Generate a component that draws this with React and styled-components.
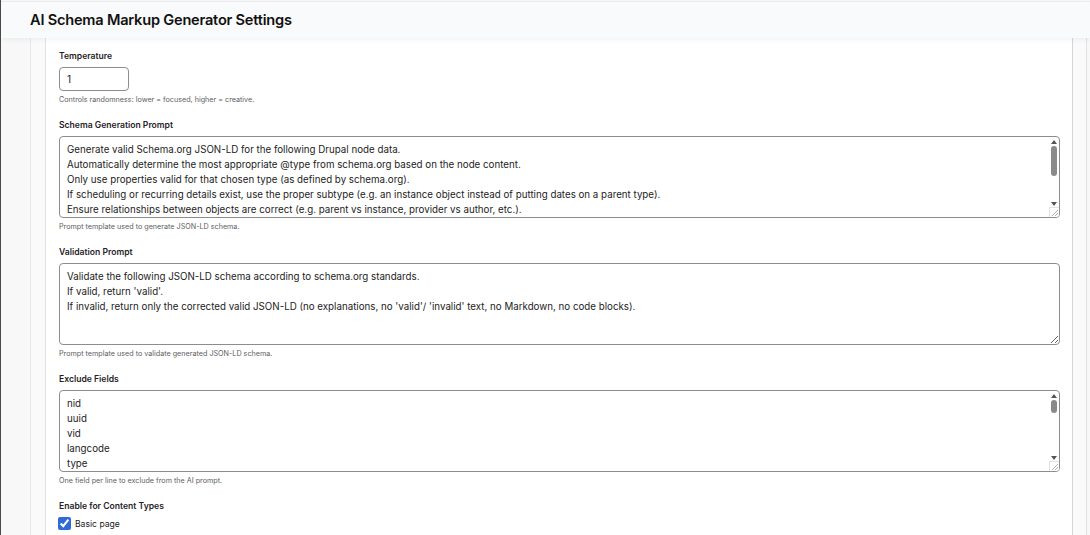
import styled, { createGlobalStyle } from "styled-components";

const GlobalStyle = createGlobalStyle`
  html, body {
    margin: 0;
    padding: 0;
    background: #f8f8f9;
    font-family: Inter, "Noto Sans", "Liberation Sans", sans-serif;
    color: #222;
  }
  * { box-sizing: border-box; }
`;

const Page = styled.div`
  min-height: 535px;
  border-left: 1px solid #4a4a4a;
  display: flex;
  flex-direction: column;
`;

const Header = styled.header`
  height: 37px;
  margin-top: 1px;
  border-top: 1px solid #ececee;
  background: #f9fafb;
  display: flex;
  align-items: center;
  padding-left: 29px;
  box-shadow: 0 2px 5px rgba(0, 0, 0, 0.05);
  position: relative;
  z-index: 1;
`;

const Title = styled.h1`
  margin: 0;
  font-size: 14.6px;
  font-weight: 600;
  letter-spacing: -0.015em;
  color: #111;
`;

const Outer = styled.div`
  flex: 1;
  margin-left: 29px;
  margin-right: 3px;
  border-left: 1px solid #e8e8ea;
  border-right: 1px solid #e2e2e4;
  background: #fafafa;
  padding: 0 13px 0 14px;
  display: flex;
`;

const Card = styled.main`
  flex: 1;
  background: #fff;
  border-left: 1px solid #e2e2e4;
  border-right: 1px solid #d6d6d8;
  padding: 12px 12px 0 13px;
`;

const Field = styled.div`
  display: flex;
  flex-direction: column;
  margin-bottom: 14px;
`;

const Label = styled.label`
  font-size: 8.6px;
  font-weight: 600;
  line-height: 12px;
  color: #1f2228;
  margin-bottom: 5px;
`;

const TextInput = styled.input`
  width: 70px;
  height: 24px;
  border: 1px solid #8d8d8d;
  border-radius: 4px;
  padding: 0 7px;
  font-family: inherit;
  font-size: 10px;
  color: #222;
`;

const AreaWrap = styled.div`
  position: relative;
`;

const TextArea = styled.textarea`
  width: 100%;
  height: 82px;
  border: 1px solid #8d8d8d;
  border-radius: 4px;
  padding: 4.5px 18px 3px 7px;
  font-family: inherit;
  font-size: 9.75px;
  line-height: 15px;
  color: #1c1c1c;
  resize: vertical;
  white-space: pre;
  overflow: hidden;
  display: block;
`;

/* drawn scrollbar, sits over the textarea's right edge */
const ScrollTrack = styled.div`
  position: absolute;
  top: 3px;
  right: 2px;
  bottom: 11px;
  width: 9px;
  display: flex;
  flex-direction: column;
  align-items: center;
  pointer-events: none;
`;

const Arrow = styled.svg`
  flex: none;
  margin: 1px 0;
`;

const Thumb = styled.div`
  flex: none;
  width: 6px;
  border-radius: 3px;
  background: #8a8a8a;
`;

const Spacer = styled.div`
  flex: 1;
`;

const Corner = styled.div`
  position: absolute;
  right: 1px;
  bottom: 1px;
  width: 10px;
  height: 10px;
  border-left: 1px solid #e2e2e2;
  border-top: 1px solid #e2e2e2;
  background: #fff;
  pointer-events: none;
  border-bottom-right-radius: 3px;
`;

const Grip = styled.svg`
  position: absolute;
  right: 1px;
  bottom: 1px;
`;

const Help = styled.div`
  margin-top: 4px;
  font-size: 7.2px;
  line-height: 10px;
  color: #5e5e62;
`;

const CheckRow = styled.label`
  display: flex;
  align-items: center;
  gap: 4px;
  font-size: 8.6px;
  color: #222;
`;

const Check = styled.input`
  width: 13px;
  height: 13px;
  margin: 0 0 0 -1px;
  accent-color: #2f6bd8;
`;

function ScrollArea({ value, thumbTop, thumbSize }) {
  return (
    <AreaWrap>
      <TextArea defaultValue={value} />
      <ScrollTrack>
        <Arrow width="6" height="4" viewBox="0 0 6 4">
          <path d="M3 0L6 4H0z" fill="#555" />
        </Arrow>
        <Thumb style={{ marginTop: thumbTop, height: thumbSize }} />
        <Spacer />
        <Arrow width="6" height="4" viewBox="0 0 6 4">
          <path d="M0 0H6L3 4z" fill="#555" />
        </Arrow>
      </ScrollTrack>
      <Corner>
        <Grip width="7" height="7" viewBox="0 0 7 7">
          <path d="M7 1L1 7M7 4L4 7" stroke="#999" strokeWidth="0.8" />
        </Grip>
      </Corner>
    </AreaWrap>
  );
}

const schemaPrompt = `Generate valid Schema.org JSON-LD for the following Drupal node data.
Automatically determine the most appropriate @type from schema.org based on the node content.
Only use properties valid for that chosen type (as defined by schema.org).
If scheduling or recurring details exist, use the proper subtype (e.g. an instance object instead of putting dates on a parent type).
Ensure relationships between objects are correct (e.g. parent vs instance, provider vs author, etc.).
Never invent or guess missing details; omit any property that cannot be derived from the data.
Use absolute URLs for url, image and sameAs properties.
Format dates and times in ISO 8601.
Include @context set to https://schema.org.
Return only the JSON-LD object.`;

const validationPrompt = `Validate the following JSON-LD schema according to schema.org standards.
If valid, return 'valid'.
If invalid, return only the corrected valid JSON-LD (no explanations, no 'valid'/ 'invalid' text, no Markdown, no code blocks).`;

const excludeFields = [
  "nid", "uuid", "vid", "langcode", "type", "revision_timestamp", "revision_uid",
  "revision_log", "status", "uid", "created", "changed", "promote", "sticky",
  "default_langcode", "revision_default", "revision_translation_affected",
  "path", "menu_link", "comment", "field_meta_tags",
].join("\n");

export default function App() {
  return (
    <>
      <GlobalStyle />
      <Page>
        <Header>
          <Title>AI Schema Markup Generator Settings</Title>
        </Header>
        <Outer>
          <Card>
            <Field>
              <Label>Temperature</Label>
              <TextInput defaultValue="1" />
              <Help>Controls randomness: lower = focused, higher = creative.</Help>
            </Field>
            <Field>
              <Label>Schema Generation Prompt</Label>
              <ScrollArea value={schemaPrompt} thumbTop={1} thumbSize={30} />
              <Help>Prompt template used to generate JSON-LD schema.</Help>
            </Field>
            <Field>
              <Label>Validation Prompt</Label>
              <TextArea defaultValue={validationPrompt} />
              <Help>Prompt template used to validate generated JSON-LD schema.</Help>
            </Field>
            <Field>
              <Label>Exclude Fields</Label>
              <ScrollArea value={excludeFields} thumbTop={1} thumbSize={13} />
              <Help>One field per line to exclude from the AI prompt.</Help>
            </Field>
            <Field>
              <Label>Enable for Content Types</Label>
              <CheckRow>
                <Check type="checkbox" defaultChecked />
                Basic page
              </CheckRow>
            </Field>
          </Card>
        </Outer>
      </Page>
    </>
  );
}
